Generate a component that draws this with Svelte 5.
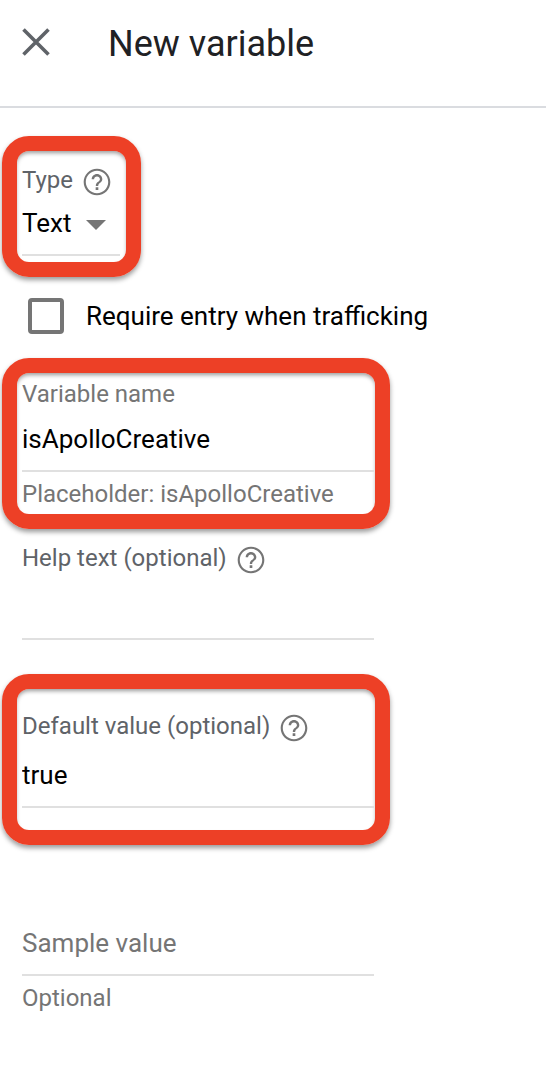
<script>
  let required = $state(false);
  let type = $state('Text');
  let name = $state('isApolloCreative');
  let helpText = $state('');
  let defaultValue = $state('true');
  let sampleValue = $state('');
</script>

{#snippet help(label)}
  <button class="help" type="button" aria-label={label}>
    <svg viewBox="0 0 24 24" aria-hidden="true">
      <path d="M11 18h2v-2h-2v2zm1-16C6.480 2 2 6.480 2 12s4.480 10 10 10 10-4.480 10-10S17.520 2 12 2zm0 18.400c-4.630 0-8.400-3.770-8.400-8.400S7.370 3.600 12 3.600s8.400 3.770 8.400 8.400-3.770 8.400-8.400 8.400zM12 6c-2.210 0-4 1.790-4 4h1.800c0-1.210.990-2.200 2.200-2.200s2.200.990 2.200 2.200c0 2-3.100 1.750-3.100 5h1.800c0-2.250 3.100-2.500 3.100-5 0-2.210-1.790-4-4-4z" />
    </svg>
  </button>
{/snippet}

<header>
  <button class="close" type="button" aria-label="Close">
    <svg viewBox="0 0 28 28" aria-hidden="true">
      <path d="M1.500 1.500L26.500 26.500M26.500 1.500L1.500 26.500" />
    </svg>
  </button>
  <h1>New variable</h1>
</header>

<form>
  <div class="field marked type">
    <div class="label-row">
      <label for="type">Type</label>
      {@render help('About type')}
    </div>
    <div class="select">
      <select id="type" bind:value={type}>
        <option>Text</option>
      </select>
      <svg viewBox="0 0 20 10" aria-hidden="true"><path d="M0 0h20L10 10z" /></svg>
    </div>
  </div>

  <label class="check">
    <input type="checkbox" bind:checked={required} />
    Require entry when trafficking
  </label>

  <div class="field marked name">
    <label for="name">Variable name</label>
    <input id="name" type="text" bind:value={name} />
    <p>Placeholder: {name}</p>
  </div>

  <div class="field roomy plain">
    <div class="label-row">
      <label for="help-text">Help text (optional)</label>
      {@render help('About help text')}
    </div>
    <input id="help-text" type="text" bind:value={helpText} />
  </div>

  <div class="field roomy marked default">
    <div class="label-row">
      <label for="default">Default value (optional)</label>
      {@render help('About default value')}
    </div>
    <input id="default" type="text" bind:value={defaultValue} />
  </div>

  <div class="field plain sample">
    <input type="text" placeholder="Sample value" aria-label="Sample value" bind:value={sampleValue} />
    <p>Optional</p>
  </div>
</form>

<style>
  :global(body) {
    margin: 0;
    background: #fff;
    font-family: Roboto, "Liberation Sans", sans-serif;
    color: #000;
  }

  header {
    display: flex;
    align-items: flex-start;
    gap: 48px;
    padding: 20px 12px 38px;
    border-bottom: 2px solid #dadce0;
  }

  button {
    padding: 0;
    border: 0;
    background: none;
    cursor: pointer;
  }

  .close {
    display: grid;
    place-items: center;
    width: 48px;
    height: 44px;
  }

  .close svg {
    width: 28px;
    height: 28px;
    fill: none;
    stroke: #5f6368;
    stroke-width: 3.6;
  }

  h1 {
    margin: 0;
    font-size: 36px;
    line-height: 48px;
    font-weight: 400;
    color: #202124;
  }

  form {
    display: flex;
    flex-direction: column;
    align-items: flex-start;
    padding: 28px 2px 70px;
  }

  .field {
    box-sizing: border-box;
    display: flex;
    flex-direction: column;
    gap: 16px;
    width: 100%;
    max-width: 388px;
  }

  .roomy {
    gap: 20px;
  }

  .plain {
    padding: 0 16px 0 20px;
  }

  .marked {
    border: 15px solid #ed4026;
    border-radius: 27px;
    padding-left: 5px;
    padding-right: 1px;
    box-shadow: 0 3px 5px rgba(0, 0, 0, 0.4), inset 0 3px 4px -1px rgba(0, 0, 0, 0.4);
  }

  .type {
    gap: 14px;
    width: auto;
    padding: 15px 6px 6px 5px;
  }

  .name {
    margin-top: 24px;
    padding-top: 7px;
    padding-bottom: 6px;
    margin-bottom: 15px;
  }

  .default {
    margin-top: 34px;
    padding-top: 23px;
    padding-bottom: 22px;
  }

  .sample {
    margin-top: 83px;
  }

  .label-row {
    display: flex;
    align-items: center;
    gap: 8px;
    height: 28px;
  }

  .field label,
  p {
    margin: 0;
    font-size: 24px;
    line-height: 28px;
    color: #757575;
  }

  .label-row label {
    color: #5f6368;
  }

  .field p {
    margin-top: -8px;
  }

  .help {
    display: block;
    width: 32px;
    height: 32px;
    margin-top: 4px;
  }

  .help svg {
    display: block;
    fill: #757575;
  }

  input[type='text'],
  select {
    box-sizing: border-box;
    width: 100%;
    height: 48px;
    margin: 0;
    padding: 0 0 16px;
    border: 0;
    border-bottom: 2px solid #e0e0e0;
    border-radius: 0;
    outline: 0;
    background: transparent;
    appearance: none;
    font: 26px/30px Roboto, "Liberation Sans", sans-serif;
    color: #000;
  }

  input::placeholder {
    color: #757575;
    opacity: 1;
  }

  .select {
    display: grid;
    width: 98px;
  }

  .select > * {
    grid-area: 1 / 1;
  }

  .select svg {
    width: 20px;
    height: 10px;
    justify-self: end;
    margin: 12px 14px 0 0;
    fill: #757575;
    pointer-events: none;
  }

  .check {
    display: flex;
    align-items: center;
    gap: 22px;
    margin: 21px 0 0 26px;
    font-size: 26px;
    line-height: 30px;
  }

  .check input {
    flex: none;
    width: 36px;
    height: 36px;
    margin: 0;
    border: 4px solid #757575;
    border-radius: 4px;
    appearance: none;
  }

  .check input:checked {
    background: #757575;
  }
</style>
